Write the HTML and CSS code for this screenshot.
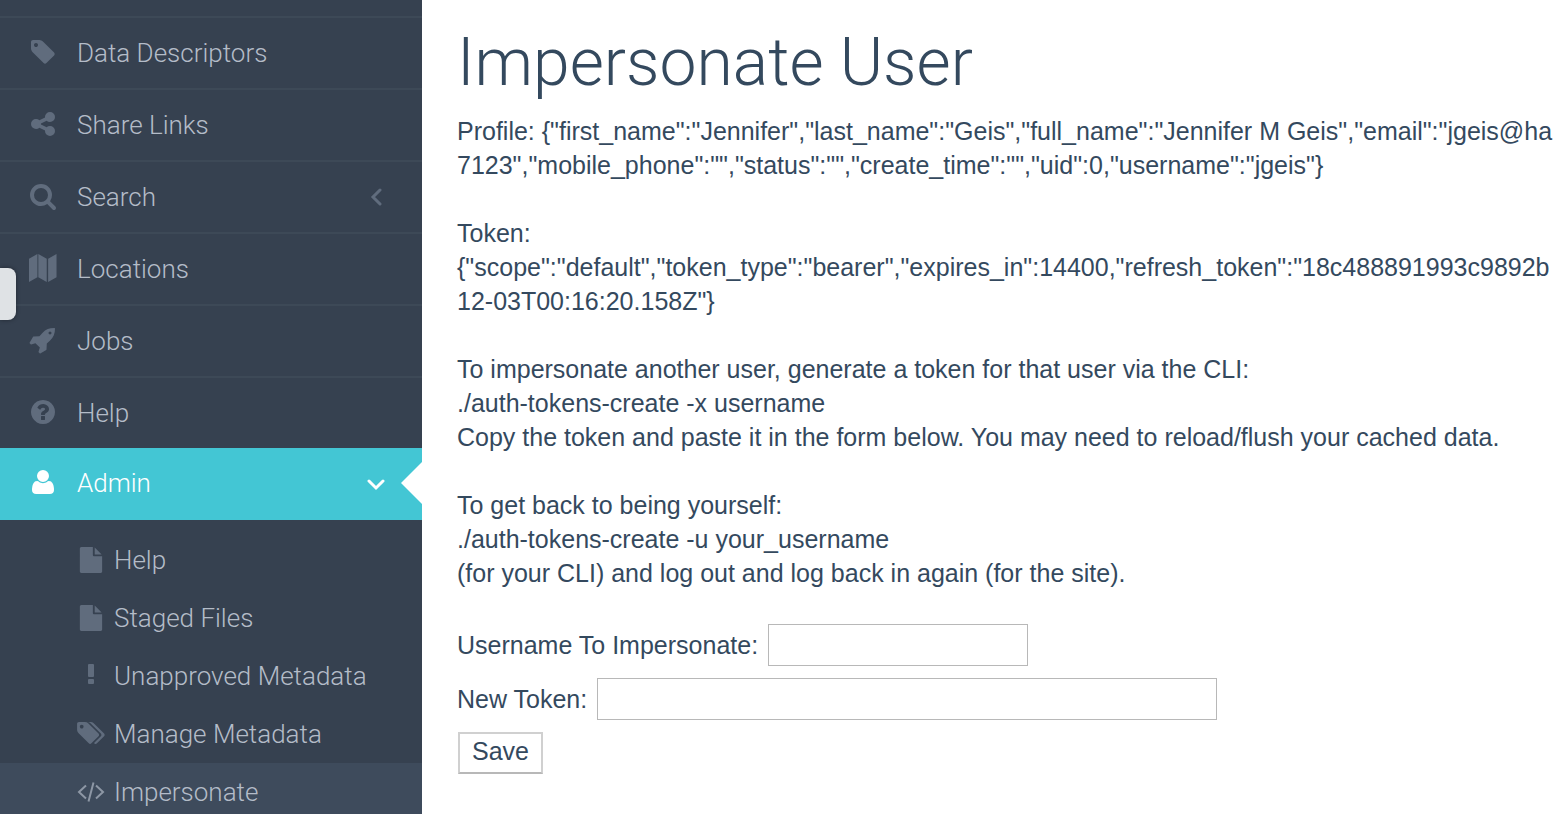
FILE: index.html
```html
<!DOCTYPE html>
<html lang="en">
<head>
<meta charset="utf-8">
<title>Impersonate User</title>
<link rel="stylesheet" href="styles.css">
</head>
<body>
<div class="page">
  <nav class="sidebar" aria-label="Main">
    <ul class="menu">
      <li><a class="menu-link" href="#">
        <svg class="icon" viewBox="0 0 1792 1792"><path d="M576 448q0-53-37.500-90.500t-90.500-37.500-90.500 37.500-37.500 90.500 37.500 90.500 90.500 37.500 90.500-37.500 37.500-90.500zm1067 576q0 53-37 90l-491 492q-39 37-91 37-53 0-90-37l-715-716q-38-37-64.500-101t-26.500-117v-416q0-52 38-90t90-38h416q53 0 117 26.500t102 64.500l715 714q37 39 37 91z"/></svg>
        <span>Data Descriptors</span></a></li>
      <li><a class="menu-link" href="#">
        <svg class="icon" viewBox="0 0 1792 1792"><path d="M1344 1024q133 0 226.500 93.500t93.500 226.500-93.500 226.500-226.500 93.500-226.500-93.500-93.500-226.500q0-12 2-34l-360-180q-92 86-218 86-133 0-226.500-93.500t-93.500-226.500 93.500-226.500 226.500-93.500q126 0 218 86l360-180q-2-22-2-34 0-133 93.500-226.500t226.500-93.500 226.500 93.500 93.500 226.500-93.500 226.500-226.500 93.500q-126 0-218-86l-360 180q2 22 2 34t-2 34l360 180q92-86 218-86z"/></svg>
        <span>Share Links</span></a></li>
      <li><a class="menu-link" href="#">
        <svg class="icon" viewBox="0 0 1792 1792"><path d="M1216 832q0-185-131.500-316.500t-316.500-131.500-316.500 131.500-131.500 316.500 131.500 316.500 316.500 131.500 316.500-131.500 131.500-316.500zm512 832q0 52-38 90t-90 38q-54 0-90-38l-343-342q-179 124-399 124-143 0-273.500-55.500t-225-150-150-225-55.500-273.500 55.500-273.500 150-225 225-150 273.500-55.500 273.500 55.500 225 150 150 225 55.500 273.500q0 220-124 399l343 343q37 37 37 90z"/></svg>
        <span>Search</span>
        <svg class="chevron" viewBox="0 0 18 18"><path d="M13 2L6 9l7 7"/></svg></a></li>
      <li><a class="menu-link" href="#">
        <svg class="icon" viewBox="0 0 30 30"><path d="M0 5L9 0v25l-9 5zM10 0l9 5v25l-9-5zM20.500 5L29.500 0v25l-9 5z"/></svg>
        <span>Locations</span></a></li>
      <li><a class="menu-link" href="#">
        <svg class="icon" viewBox="0 0 1792 1792"><path d="M1440 448q0-40-28-68t-68-28-68 28-28 68 28 68 68 28 68-28 28-68zm224-288q0 249-75.500 430.500t-253.500 360.500q-81 80-195 176l-20 379q-2 16-16 26l-384 224q-7 4-16 4-12 0-23-9l-64-64q-13-14-8-32l85-276-281-281-276 85q-3 1-9 1-14 0-23-9l-64-64q-17-19-5-39l224-384q10-14 26-16l379-20q96-114 176-195 188-187 358-258t431-71q14 0 24 9.500t10 22.500z"/></svg>
        <span>Jobs</span></a></li>
      <li><a class="menu-link" href="#">
        <svg class="icon" viewBox="0 0 1792 1792"><path d="M1024 1376v-192q0-14-9-23t-23-9h-192q-14 0-23 9t-9 23v192q0 14 9 23t23 9h192q14 0 23-9t9-23zm256-672q0-88-55.500-163t-138.500-116-170-41q-243 0-371 213-15 24 8 42l132 100q7 6 19 6 16 0 25-12 53-68 86-92 34-24 86-24 48 0 85.500 26t37.500 59q0 38-20 61t-68 45q-63 28-115.500 86.500t-52.500 125.500v36q0 14 9 23t23 9h192q14 0 23-9t9-23q0-19 21.500-49.500t54.500-49.500q32-18 49-28.500t46-35 44.500-48 28-60.500 12.500-81zm384 192q0 209-103 385.500t-279.500 279.500-385.500 103-385.500-103-279.500-279.500-103-385.500 103-385.500 279.500-279.500 385.500-103 385.500 103 279.500 279.500 103 385.500z"/></svg>
        <span>Help</span></a></li>
      <li><a class="menu-link menu-link-open" href="#" aria-expanded="true">
        <svg class="icon" viewBox="0 0 1792 1792"><path d="M1600 1405q0 120-73 189.500t-194 69.500h-874q-121 0-194-69.500t-73-189.500q0-53 3.500-103.500t14-109 26.500-108.500 43-97.500 62-81 85.500-53.500 111.500-20q9 0 42 21.500t74.500 48 108 48 133.500 21.500 133.500-21.500 108-48 74.500-48 42-21.500q61 0 111.500 20t85.500 53.500 62 81 43 97.500 26.500 108.500 14 109 3.500 103.500zm-320-893q0 159-112.500 271.500t-271.500 112.500-271.500-112.500-112.500-271.500 112.500-271.500 271.500-112.500 271.500 112.500 112.500 271.500z"/></svg>
        <span>Admin</span>
        <svg class="chevron" viewBox="0 0 18 18"><path d="M2 7l7 7 7-7"/></svg></a>
        <ul class="submenu">
          <li><a class="sub-link" href="#">
            <svg class="sub-icon" viewBox="0 0 1792 1792"><path d="M1152 512v-472q22 14 36 28l408 408q14 14 28 36h-472zm-128 32q0 40 28 68t68 28h544v1056q0 40-28 68t-68 28h-1344q-40 0-68-28t-28-68v-1600q0-40 28-68t68-28h800v544z"/></svg>
            <span>Help</span></a></li>
          <li><a class="sub-link" href="#">
            <svg class="sub-icon" viewBox="0 0 1792 1792"><path d="M1152 512v-472q22 14 36 28l408 408q14 14 28 36h-472zm-128 32q0 40 28 68t68 28h544v1056q0 40-28 68t-68 28h-1344q-40 0-68-28t-28-68v-1600q0-40 28-68t68-28h800v544z"/></svg>
            <span>Staged Files</span></a></li>
          <li><a class="sub-link" href="#">
            <svg class="sub-icon" viewBox="0 0 26 26"><rect x="10" y="1" width="6" height="13" rx="1"/><rect x="10" y="16" width="6" height="5" rx="1"/></svg>
            <span>Unapproved Metadata</span></a></li>
          <li><a class="sub-link" href="#">
            <svg class="sub-icon" viewBox="64 64 1792 1792"><path d="M448 448q0-53-37.500-90.500t-90.500-37.500-90.500 37.500-37.500 90.500 37.500 90.500 90.500 37.500 90.500-37.500 37.500-90.500zm1067 576q0 53-37 90l-491 492q-39 37-91 37-53 0-90-37l-715-716q-38-37-64.500-101t-26.500-117v-416q0-52 38-90t90-38h416q53 0 117 26.500t102 64.500l715 714q37 39 37 91zm384 0q0 53-37 90l-491 492q-39 37-91 37-36 0-59-14t-53-45l470-470q37-37 37-90 0-52-37-91l-715-714q-38-38-102-64.500t-117-26.500h224q53 0 117 26.500t102 64.500l715 714q37 39 37 91z"/></svg>
            <span>Manage Metadata</span></a></li>
          <li><a class="sub-link sub-link-current" href="#" aria-current="page">
            <svg class="sub-icon sub-icon-line" viewBox="0 0 26 26"><path d="M8 6.500L1 13l7 6.500M18 6.500l7 6.500-7 6.500M15.500 3.500l-5 19"/></svg>
            <span>Impersonate</span></a></li>
        </ul>
      </li>
    </ul>
    <button class="drawer-tab" type="button" aria-label="Toggle panel"></button>
  </nav>
  <main class="content">
    <h1 class="title">Impersonate User</h1>
    <p class="text">Profile: {"first_name":"Jennifer","last_name":"Geis","full_name":"Jennifer M Geis","email":"jgeis@ha
7123","mobile_phone":"","status":"","create_time":"","uid":0,"username":"jgeis"}</p>
    <p class="text">Token:
{"scope":"default","token_type":"bearer","expires_in":14400,"refresh_token":"18c488891993c9892b
12-03T00:16:20.158Z"}</p>
    <p class="text">To impersonate another user, generate a token for that user via the CLI:
./auth-tokens-create -x username
Copy the token and paste it in the form below. You may need to reload/flush your cached data.</p>
    <p class="text">To get back to being yourself:
./auth-tokens-create -u your_username
(for your CLI) and log out and log back in again (for the site).</p>
    <form class="form">
      <div class="field">
        <label for="username">Username To Impersonate:</label>
        <input class="input" id="username" type="text">
      </div>
      <div class="field">
        <label for="token">New Token:</label>
        <input class="input input-wide" id="token" type="text">
      </div>
      <button class="save" type="submit">Save</button>
    </form>
  </main>
</div>
</body>
</html>
```
FILE: styles.css
```css
* {
  box-sizing: border-box;
}

body {
  margin: 0;
  background: #fff;
  color: #34495e;
  font-family: "Liberation Sans", Arial, sans-serif;
  font-size: 25px;
  line-height: 34px;
}

.page {
  display: flex;
  height: 100vh;
  overflow: hidden;
}

.sidebar {
  position: relative;
  flex: 0 0 422px;
  background: #364150;
  font-family: Roboto, sans-serif;
  font-size: 26px;
  font-weight: 300;
}

.menu,
.submenu {
  margin: 0;
  padding: 0;
  list-style: none;
}

.menu {
  padding-top: 16px;
}

.menu-link,
.sub-link {
  display: flex;
  align-items: center;
  color: #b4bcc8;
  text-decoration: none;
}

.menu-link {
  position: relative;
  gap: 20px;
  height: 72px;
  padding: 0 37px 0 29px;
  border-top: 2px solid #3d4957;
}

.menu-link-open {
  padding-bottom: 2px;
  border-top: 0;
  background: #43c6d4;
  color: #fff;
}

/* Notch pointing from the content into the open item */
.menu-link-open::after {
  content: "";
  position: absolute;
  top: 14px;
  right: 0;
  border: 21px solid transparent;
  border-left: 0;
  border-right-color: #fff;
}

.icon,
.sub-icon {
  flex: none;
  overflow: visible;
  fill: #606c7d;
}

.icon {
  width: 28px;
  height: 28px;
  margin-bottom: 2px;
}

.menu-link-open .icon {
  fill: #fff;
}

.chevron {
  width: 18px;
  height: 18px;
  margin-left: auto;
  fill: none;
  stroke: #606c7d;
  stroke-width: 3;
  stroke-linecap: round;
}

.menu-link-open .chevron {
  stroke: #fff;
}

.submenu {
  padding-top: 11px;
}

.sub-link {
  gap: 10px;
  height: 58px;
  padding-left: 78px;
}

.sub-link-current {
  background: #3e4b5c;
}

.sub-icon {
  width: 26px;
  height: 26px;
}

.sub-icon-line {
  fill: none;
  stroke: #8d97a5;
  stroke-width: 2;
}

.drawer-tab {
  position: absolute;
  top: 268px;
  left: 0;
  width: 16px;
  height: 52px;
  padding: 0;
  border: 0;
  border-radius: 0 8px 8px 0;
  background: #dfe2e5;
  box-shadow: 0 0 4px rgba(0, 0, 0, 0.4);
}

.content {
  flex: 1;
  min-width: 0;
  padding: 27px 0 0 35px;
  overflow: hidden;
}

.title {
  margin: 0 0 15px;
  font-family: Roboto, sans-serif;
  font-size: 66px;
  font-weight: 300;
  line-height: 72px;
}

.text {
  margin: 0 0 34px;
  white-space: pre;
}

.form {
  display: flex;
  flex-direction: column;
  align-items: flex-start;
  gap: 12px;
}

.field {
  display: flex;
  align-items: center;
  gap: 10px;
}

.input {
  width: 260px;
  height: 42px;
  padding: 2px 4px;
  border: 1px solid #b8b8b8;
  background: #fff;
  color: inherit;
  font: inherit;
}

.input-wide {
  width: 620px;
}

.save {
  height: 42px;
  margin-left: 1px;
  padding: 0 12px 4px;
  border: 2px solid #d0d0d0;
  border-bottom-color: #b8b8b8;
  background: #fff;
  color: inherit;
  font: inherit;
}
```
